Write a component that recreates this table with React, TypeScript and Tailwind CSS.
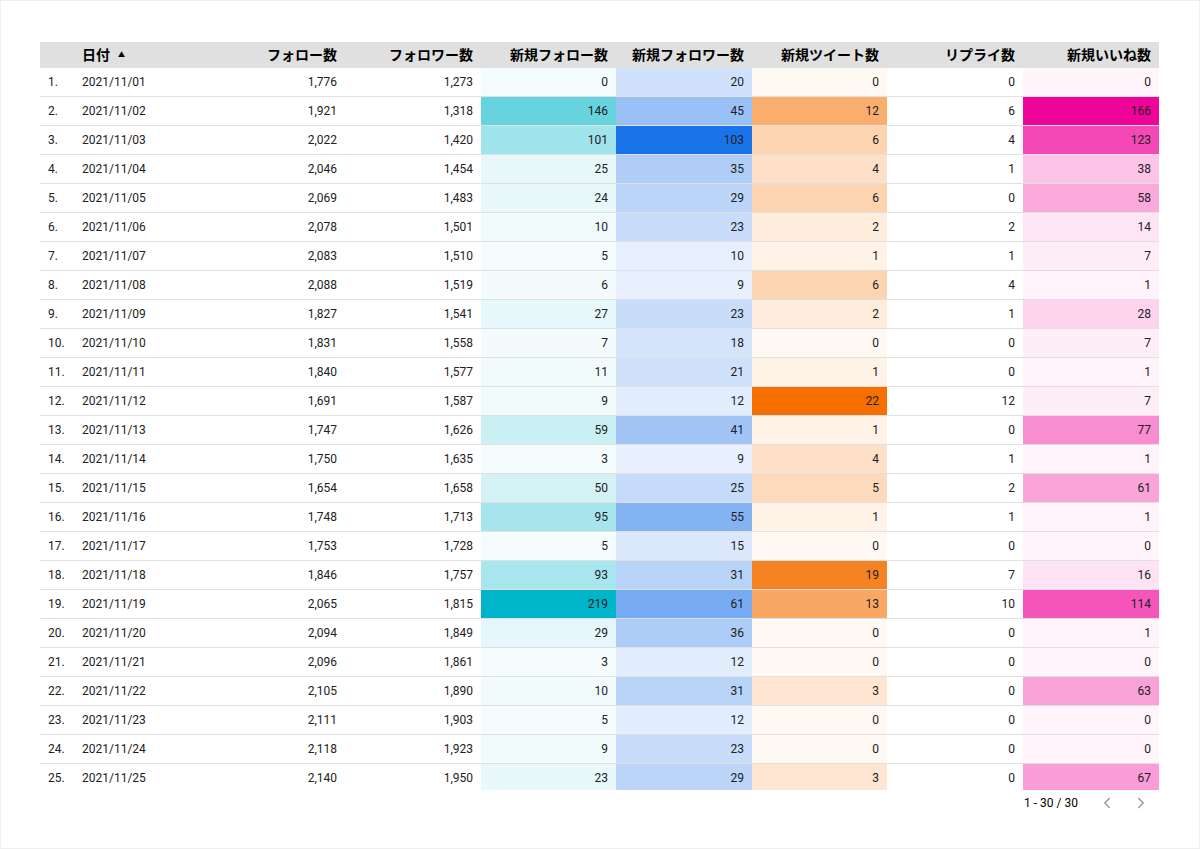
import { ChevronLeft, ChevronRight } from 'lucide-react';

type Row = [string, string, string, number, number, number, number, number];

const rows: Row[] = [
  ['2021/11/01', '1,776', '1,273', 0, 20, 0, 0, 0],
  ['2021/11/02', '1,921', '1,318', 146, 45, 12, 6, 166],
  ['2021/11/03', '2,022', '1,420', 101, 103, 6, 4, 123],
  ['2021/11/04', '2,046', '1,454', 25, 35, 4, 1, 38],
  ['2021/11/05', '2,069', '1,483', 24, 29, 6, 0, 58],
  ['2021/11/06', '2,078', '1,501', 10, 23, 2, 2, 14],
  ['2021/11/07', '2,083', '1,510', 5, 10, 1, 1, 7],
  ['2021/11/08', '2,088', '1,519', 6, 9, 6, 4, 1],
  ['2021/11/09', '1,827', '1,541', 27, 23, 2, 1, 28],
  ['2021/11/10', '1,831', '1,558', 7, 18, 0, 0, 7],
  ['2021/11/11', '1,840', '1,577', 11, 21, 1, 0, 1],
  ['2021/11/12', '1,691', '1,587', 9, 12, 22, 12, 7],
  ['2021/11/13', '1,747', '1,626', 59, 41, 1, 0, 77],
  ['2021/11/14', '1,750', '1,635', 3, 9, 4, 1, 1],
  ['2021/11/15', '1,654', '1,658', 50, 25, 5, 2, 61],
  ['2021/11/16', '1,748', '1,713', 95, 55, 1, 1, 1],
  ['2021/11/17', '1,753', '1,728', 5, 15, 0, 0, 0],
  ['2021/11/18', '1,846', '1,757', 93, 31, 19, 7, 16],
  ['2021/11/19', '2,065', '1,815', 219, 61, 13, 10, 114],
  ['2021/11/20', '2,094', '1,849', 29, 36, 0, 0, 1],
  ['2021/11/21', '2,096', '1,861', 3, 12, 0, 0, 0],
  ['2021/11/22', '2,105', '1,890', 10, 31, 3, 0, 63],
  ['2021/11/23', '2,111', '1,903', 5, 12, 0, 0, 0],
  ['2021/11/24', '2,118', '1,923', 9, 23, 0, 0, 0],
  ['2021/11/25', '2,140', '1,950', 23, 29, 3, 0, 67],
];

// heatmap scales: [min, max, light rgb, dark rgb, curve]
type Scale = { min: number; max: number; lo: number[]; hi: number[]; k: number };
const scales: Record<number, Scale> = {
  3: { min: 0, max: 219, lo: [245, 252, 253], hi: [0, 181, 201], k: 1.35 },
  4: { min: 9, max: 103, lo: [232, 240, 253], hi: [26, 115, 232], k: 1 },
  5: { min: 0, max: 22, lo: [255, 249, 243], hi: [245, 112, 0], k: 1 },
  7: { min: 0, max: 166, lo: [255, 245, 251], hi: [238, 4, 153], k: 1.1 },
};

function heat(col: number, v: number) {
  const s = scales[col];
  if (!s) return undefined;
  const t = Math.pow(Math.max(0, (v - s.min) / (s.max - s.min)), s.k);
  const c = s.lo.map((l, i) => Math.round(l + (s.hi[i] - l) * t));
  return `rgb(${c[0]}, ${c[1]}, ${c[2]})`;
}

const headers = ['フォロー数', 'フォロワー数', '新規フォロー数', '新規フォロワー数', '新規ツイート数', 'リプライ数', '新規いいね数'];

const grid = 'grid grid-cols-[34px_135px_136px_136px_135px_136px_135px_136px_136px]';

export default function App() {
  return (
    <div
      className="w-[1200px] h-[849px] bg-white border border-[#efefef] text-[12px] text-[#212121] overflow-hidden"
      style={{ fontFamily: 'Roboto, "Noto Sans CJK JP", sans-serif' }}
    >
      <div className="ml-[39px] mt-[41px] w-[1119px]">
        {/* header */}
        <div className={`${grid} h-[26px] bg-[#e0e0e0] font-bold text-[14px] text-black items-center`}>
          <div />
          <div className="pl-2 flex items-center gap-[8px]">
            日付
            <span className="text-[7px] leading-none">▲</span>
          </div>
          {headers.map((h) => (
            <div key={h} className="pr-2 text-right">{h}</div>
          ))}
        </div>
        {/* body */}
        <div className="h-[722px] overflow-hidden">
          {rows.map((r, i) => (
            <div key={r[0]} className={`${grid} h-[29px] border-b border-[#e0e0e0]`}>
              <div className="pl-2 flex items-center">{i + 1}.</div>
              <div className="pl-2 flex items-center">{r[0]}</div>
              {r.slice(1).map((v, j) => (
                <div
                  key={j}
                  className="pr-2 flex items-center justify-end"
                  style={{ backgroundColor: typeof v === 'number' ? heat(j + 1, v) : undefined }}
                >
                  {v}
                </div>
              ))}
            </div>
          ))}
        </div>
        {/* pager */}
        <div className="flex justify-end items-center h-[26px] pr-[9px] text-black">
          <span className="mr-[20px]">1 - 30 / 30</span>
          <ChevronLeft className="w-[18px] h-[18px] text-[#9e9e9e] mr-[16px]" strokeWidth={2.2} />
          <ChevronRight className="w-[18px] h-[18px] text-[#9e9e9e]" strokeWidth={2.2} />
        </div>
      </div>
    </div>
  );
}
